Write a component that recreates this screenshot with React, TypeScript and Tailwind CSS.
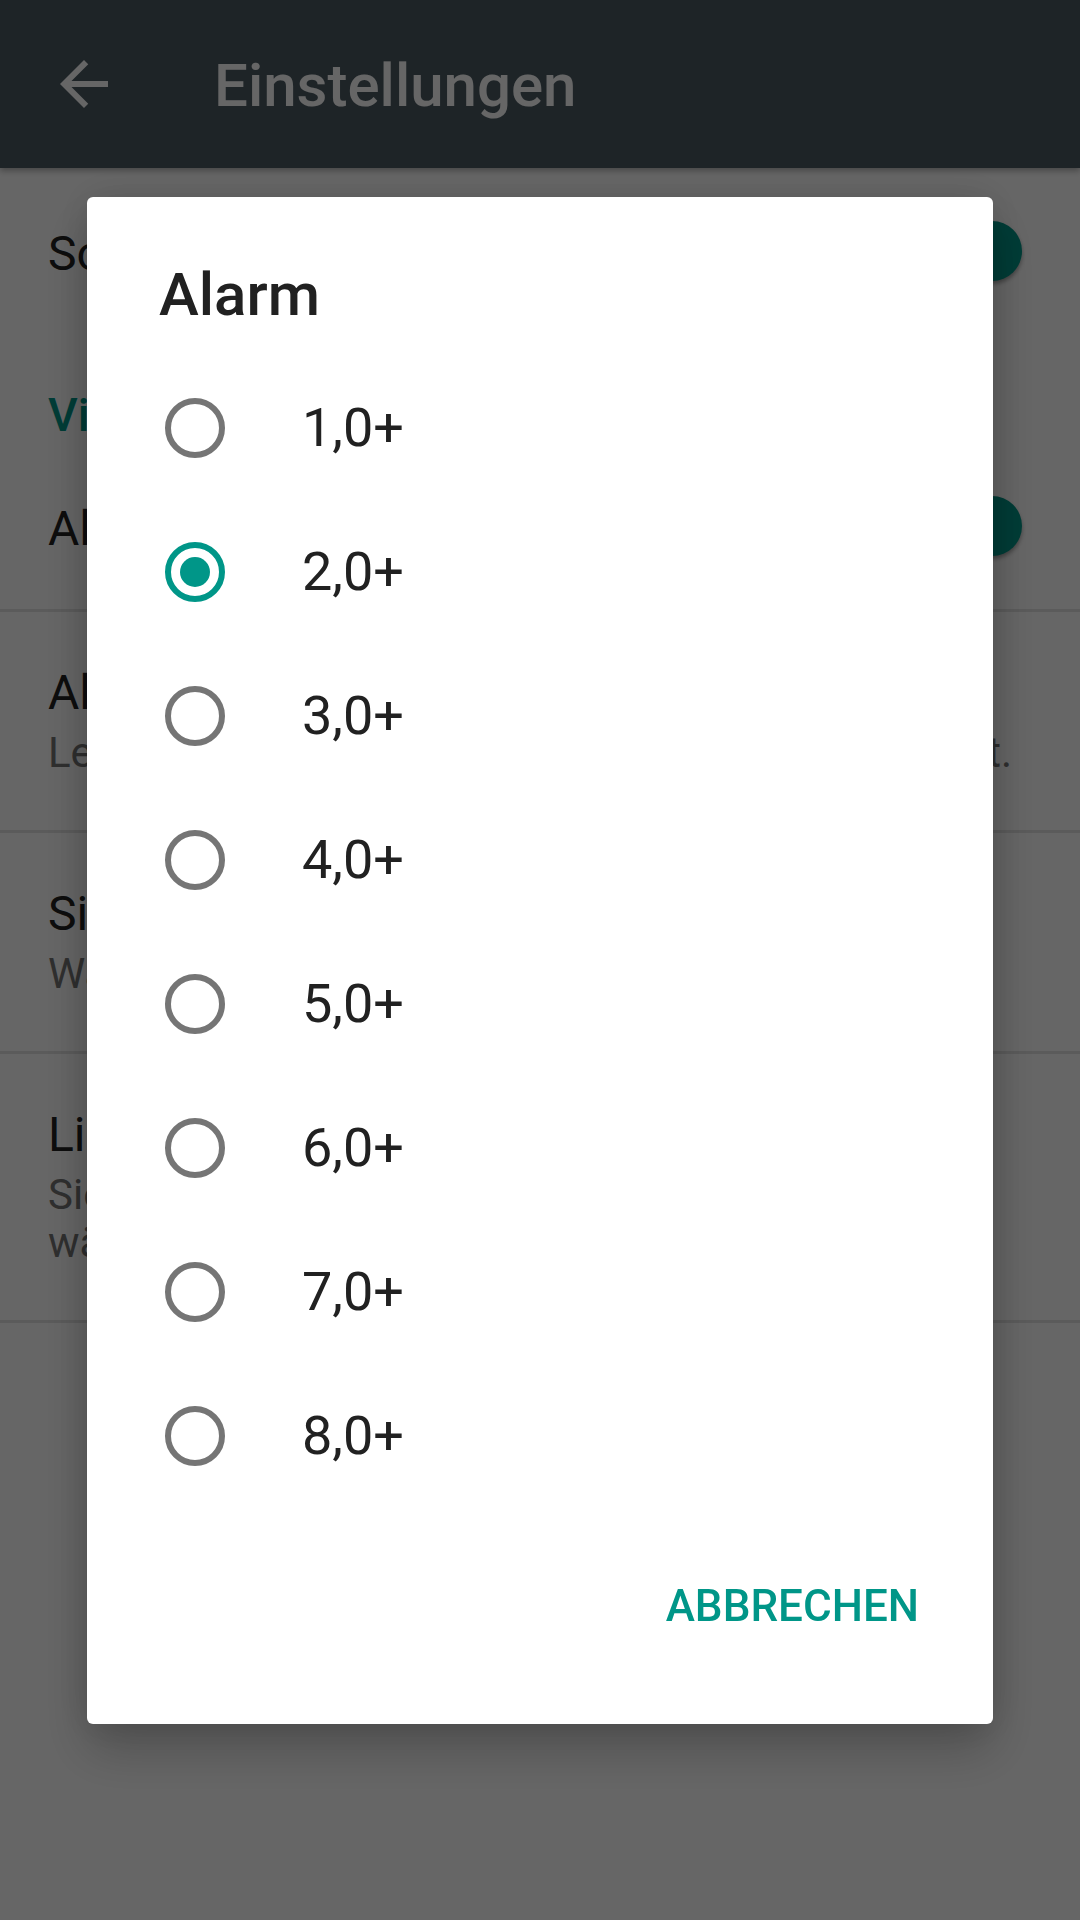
import React from "react";

const levels = ["1,0+", "2,0+", "3,0+", "4,0+", "5,0+", "6,0+", "7,0+", "8,0+"];

const Switch = () => {
    return (
        <div className="relative h-[56px] w-[102px] shrink-0">
            <div className="absolute left-[6px] right-[6px] top-[4px] h-[42px] rounded-full bg-[#80cbc4]"></div>
            <div className="absolute right-0 top-[-5px] h-[60px] w-[60px] rounded-full bg-[#009688] shadow-[0_3px_4px_rgba(0,0,0,0.35)]"></div>
        </div>
    );
};

const Radio = ({ checked }: { checked: boolean }) => {
    return (
        <div
            className={
                checked
                    ? "flex h-[60px] w-[60px] shrink-0 items-center justify-center rounded-full border-[6px] border-[#009688]"
                    : "h-[60px] w-[60px] shrink-0 rounded-full border-[6px] border-[#757575]"
            }
        >
            {checked && <div className="h-[30px] w-[30px] rounded-full bg-[#009688]"></div>}
        </div>
    );
};

export default function App() {
    const selected = "2,0+";

    return (
        <div className="relative min-h-[1920px] w-full bg-white font-['Roboto','Noto_Sans',sans-serif]">
            {/* toolbar */}
            <header className="relative z-10 flex h-[168px] items-center bg-[#4c5b63] shadow-[0_3px_6px_rgba(0,0,0,0.3)]">
                <div className="flex h-[168px] w-[168px] items-center justify-center">
                    <svg width="72" height="72" viewBox="0 0 24 24" fill="#ffffff">
                        <path d="M20 11H7.83l5.59-5.59L12 4l-8 8 8 8 1.41-1.41L7.83 13H20v-2z" />
                    </svg>
                </div>
                <h1 className="ml-[46px] pt-[4px] text-[60px] font-medium leading-[72px] text-white">
                    Einstellungen
                </h1>
            </header>

            {/* settings list */}
            <div className="flex flex-col">
                <div className="flex items-center pb-[52px] pl-[48px] pr-[58px] pt-[58px]">
                    <span className="flex-1 text-[48px] leading-[56px] text-[#212121]">
                        Sofortige Benachrichtigung
                    </span>
                    <Switch />
                </div>

                <div className="pb-[5px] pl-[48px] pt-[53px] text-[46px] font-medium leading-[56px] text-[#009688]">
                    Vibration und Alarm
                </div>

                <div className="flex items-center pb-[52px] pl-[48px] pr-[58px] pt-[53px]">
                    <span className="flex-1 text-[48px] leading-[56px] text-[#212121]">
                        Alarm aktivieren
                    </span>
                    <Switch />
                </div>
                <div className="h-[3px] bg-[#e3e3e3]"></div>

                <div className="flex flex-col py-[53px] pl-[48px] pr-[68px]">
                    <span className="text-[48px] leading-[56px] text-[#212121]">Alarmschwelle</span>
                    <div className="mt-[8px] flex justify-between whitespace-nowrap text-[42px] leading-[48px] text-[#757575]">
                        <span>Legt die Magnitude</span>
                        <span>für den Alarm fest.</span>
                    </div>
                </div>
                <div className="h-[3px] bg-[#e3e3e3]"></div>

                <div className="flex flex-col py-[53px] pl-[48px] pr-[48px]">
                    <span className="text-[48px] leading-[56px] text-[#212121]">Signalton</span>
                    <span className="mt-[8px] text-[42px] leading-[48px] text-[#757575]">
                        Warnton für Alarme
                    </span>
                </div>
                <div className="h-[3px] bg-[#e3e3e3]"></div>

                <div className="flex flex-col py-[53px] pl-[48px] pr-[48px]">
                    <span className="text-[48px] leading-[56px] text-[#212121]">Lichtsignal</span>
                    <p className="mt-[8px] text-[42px] leading-[48px] text-[#757575]">
                        Sie können die LED-Farbe
                        <br />
                        wählen
                    </p>
                </div>
                <div className="h-[3px] bg-[#e3e3e3]"></div>
            </div>

            {/* dialog */}
            <div className="fixed inset-0 z-20 flex items-center justify-center bg-black/60">
                <div className="flex w-[906px] flex-col rounded-[6px] bg-white shadow-[0_26px_50px_rgba(0,0,0,0.22),0_0_40px_rgba(0,0,0,0.12)]">
                    <h2 className="px-[72px] pt-[62px] text-[60px] font-medium leading-[72px] text-[#212121]">
                        Alarm
                    </h2>
                    <ul className="mt-[25px] flex flex-col">
                        {levels.map((level) => (
                            <li key={level} className="flex h-[144px] items-center pl-[78px]">
                                <Radio checked={level === selected} />
                                <span className="ml-[77px] text-[54px] leading-none text-[#212121]">
                                    {level}
                                </span>
                            </li>
                        ))}
                    </ul>
                    <div className="mt-[44px] flex h-[108px] items-center justify-end pr-[74px]">
                        <span className="text-[44px] font-medium uppercase text-[#009688]">Abbrechen</span>
                    </div>
                    <div className="h-[64px]"></div>
                </div>
            </div>
        </div>
    );
}
